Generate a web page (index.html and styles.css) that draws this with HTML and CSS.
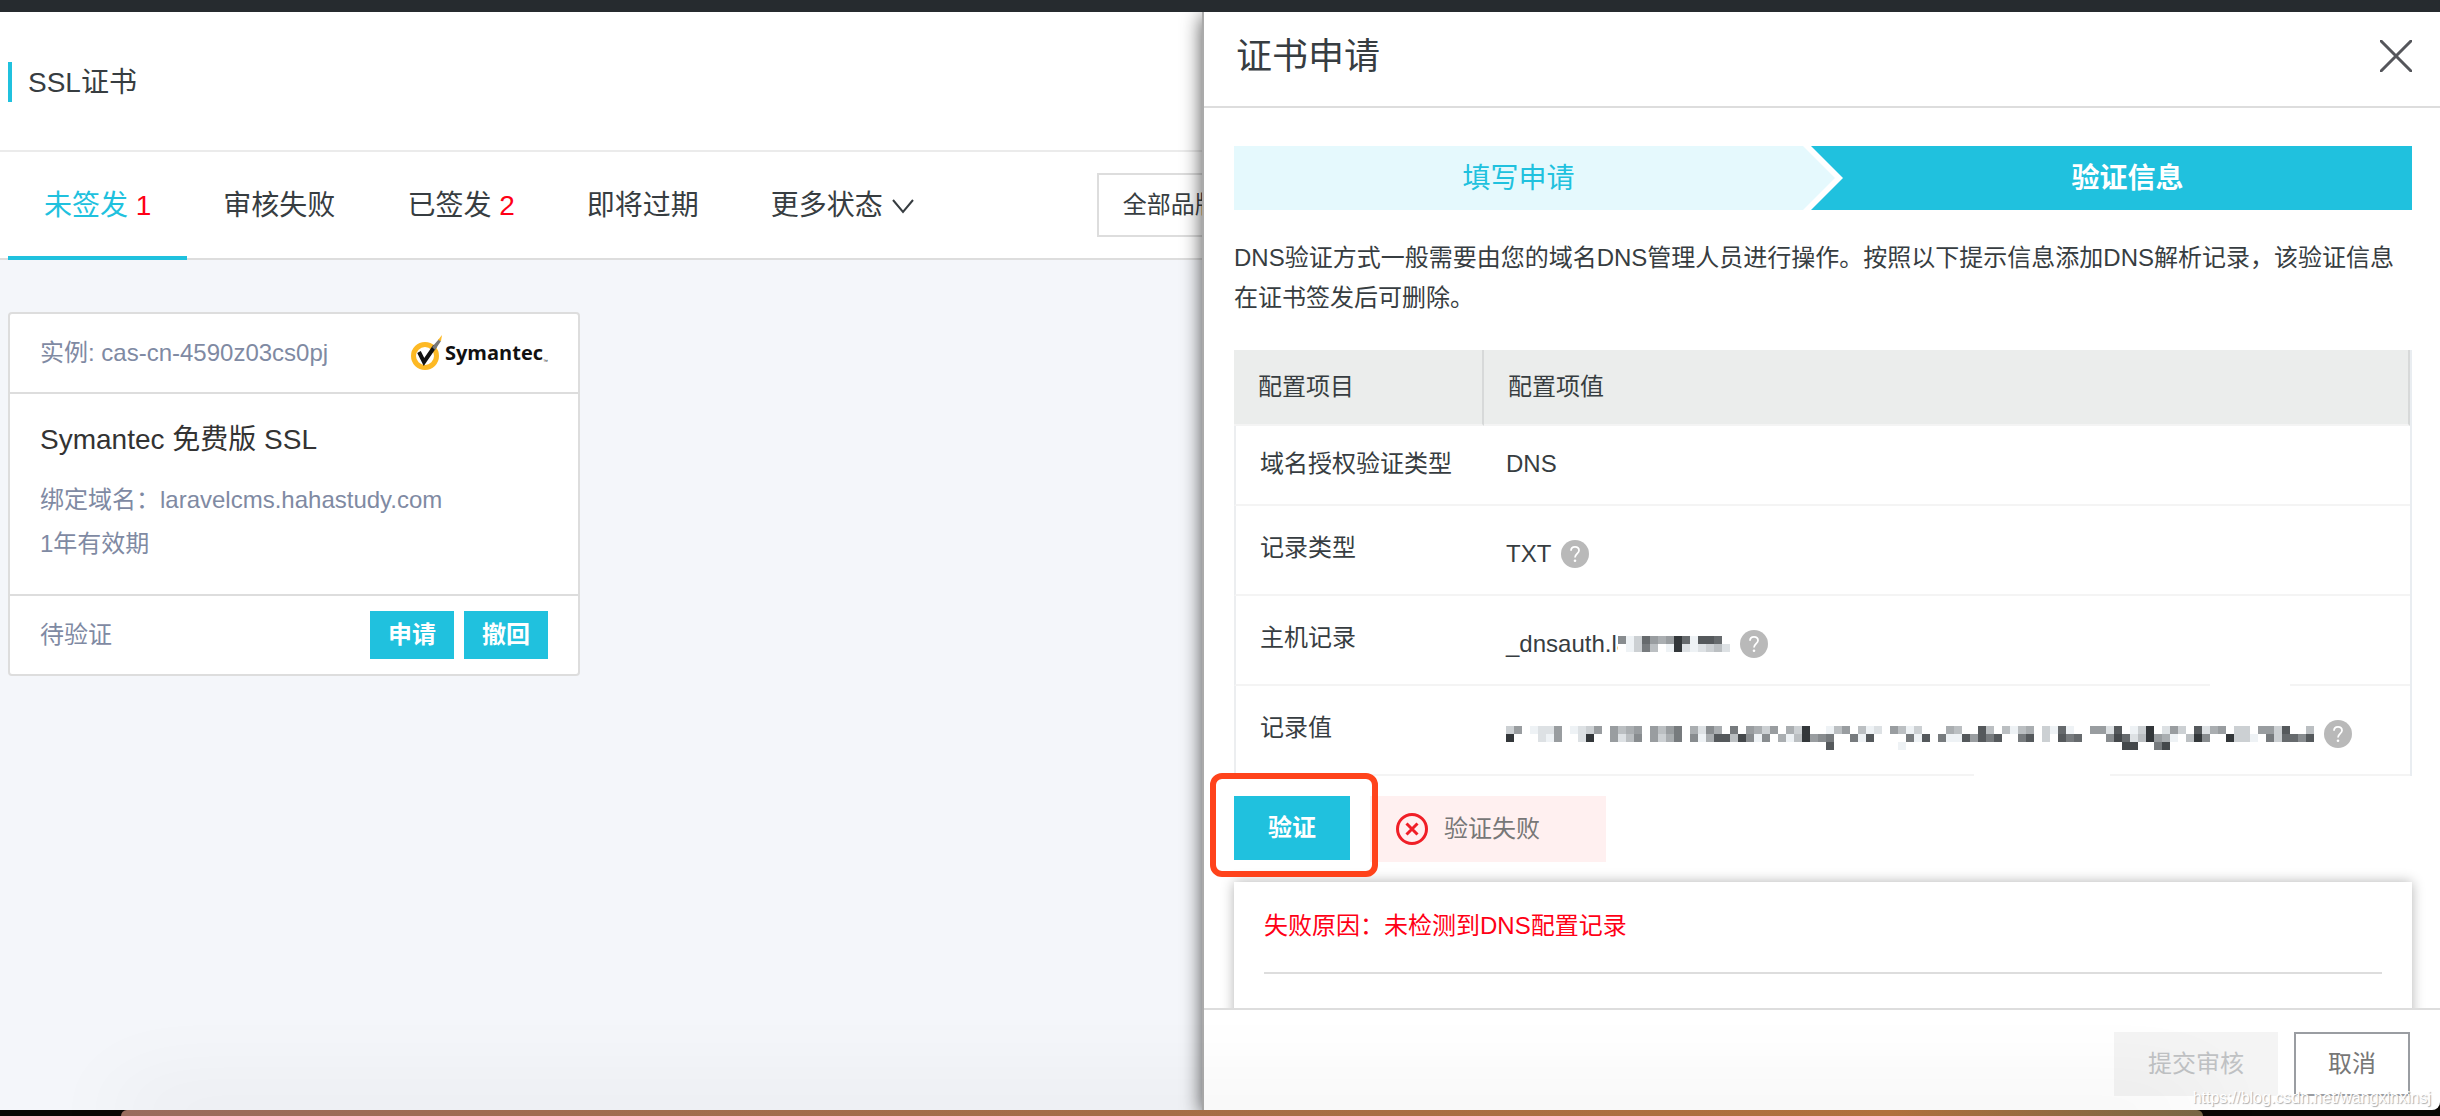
FILE: index.html
```html
<!DOCTYPE html>
<html lang="zh-CN">
<head>
<meta charset="utf-8">
<title>SSL证书</title>
<link rel="stylesheet" href="styles.css">
</head>
<body>
<svg class="sprite" aria-hidden="true">
  <symbol id="help" viewBox="0 0 28 28">
    <circle cx="14" cy="14" r="14" fill="#b9b9b9"/>
    <path d="M10 10.800C10 8.200 11.600 6.800 14 6.800s4 1.500 4 3.600c0 3-4 3.400-4 7" fill="none" stroke="#fff" stroke-width="1.800"/>
    <circle cx="14" cy="20.800" r="1.300" fill="#fff"/>
  </symbol>
</svg>
<div class="topbar"></div>
<div class="window">
  <main class="page">
    <header class="page-head"><h1 class="page-title">SSL证书</h1></header>
    <nav class="tabs">
      <button class="tab tab-active" type="button">未签发 <b class="count">1</b></button>
      <button class="tab" type="button">审核失败</button>
      <button class="tab" type="button">已签发 <b class="count">2</b></button>
      <button class="tab" type="button">即将过期</button>
      <button class="tab tab-more" type="button">更多状态
        <svg class="chevron" viewBox="0 0 24 16"><path d="M2 2l10 12L22 2" fill="none" stroke="#373d41" stroke-width="2"/></svg>
      </button>
      <select class="brand" aria-label="品牌"><option>全部品牌</option></select>
    </nav>
    <section class="cards">
      <article class="card">
        <div class="card-head">
          <span>实例: cas-cn-4590z03cs0pj</span>
          <span class="logo">
            <svg class="logo-mark" viewBox="0 0 34 38">
              <circle cx="14" cy="22" r="11.500" fill="none" stroke="#fdb924" stroke-width="5"/>
              <path d="M8 18l5 10L24 12" fill="none" stroke="#111" stroke-width="4"/>
              <path d="M21 13l7-8 2 2-6 9z" fill="#777"/>
              <path d="M27 6l4-5-1 6z" fill="#fdb924"/>
            </svg>
            <span class="logo-name">Symantec</span><span class="logo-tm">™</span>
          </span>
        </div>
        <div class="card-body">
          <h2 class="card-title">Symantec 免费版 SSL</h2>
          <p class="card-line">绑定域名：laravelcms.hahastudy.com</p>
          <p class="card-line">1年有效期</p>
        </div>
        <div class="card-foot">
          <span class="card-status">待验证</span>
          <button class="btn btn-small" type="button">申请</button>
          <button class="btn btn-small" type="button">撤回</button>
        </div>
      </article>
    </section>
  </main>

  <aside class="drawer">
    <header class="drawer-head">
      <h2 class="drawer-title">证书申请</h2>
      <button class="close" type="button" aria-label="关闭">
        <svg viewBox="0 0 32 32" width="32" height="32"><path d="M1 1l30 30M31 1L1 31" fill="none" stroke="#55565b" stroke-width="3" stroke-linecap="round"/></svg>
      </button>
    </header>
    <div class="drawer-body">
      <ol class="steps">
        <li class="step step-done">填写申请</li>
        <li class="step step-current">验证信息</li>
      </ol>
      <p class="intro">DNS验证方式一般需要由您的域名DNS管理人员进行操作。按照以下提示信息添加DNS解析记录，该验证信息在证书签发后可删除。</p>
      <table class="config">
        <colgroup><col class="col-name"><col></colgroup>
        <thead><tr><th>配置项目</th><th>配置项值</th></tr></thead>
        <tbody>
          <tr class="short"><td>域名授权验证类型</td><td>DNS</td></tr>
          <tr><td>记录类型</td><td><div class="value">TXT <svg class="help"><use href="#help"/></svg></div></td></tr>
          <tr><td>主机记录</td><td class="wiped wiped-narrow"><div class="value"><span>_dnsauth.la</span><svg class="mosaic mosaic-host" data-rows="8ec69a936e556. fec7b.e3dedcbd"></svg><svg class="help"><use href="#help"/></svg></div></td></tr>
          <tr><td>记录值</td><td class="wiped wiped-wide"><div class="value"><svg class="mosaic" data-rows="c9.edd9.edc9.9ba9.9b97.ad8a.7.9ac9.ac3..eb9.bed.9bec...ab..5b.beba.ce6e..99d5.ec3.d9c.5da9.cc.99c5..b 3...de9..d3..9db8.9ca7.8ea55b48e8.aeb3987..7e5....7e5.7ee59575..75.c.576...846db39ae.b38..3cce.7c6685 ........................................5........e...........................44..74"></svg><svg class="help"><use href="#help"/></svg></div></td></tr>
        </tbody>
      </table>
      <div class="verify">
        <div class="marked"><button class="btn btn-verify" type="button">验证</button></div>
        <div class="result" role="status">
          <svg viewBox="0 0 32 32" width="32" height="32"><circle cx="16" cy="16" r="14.500" fill="none" stroke="#f01f27" stroke-width="3"/><path d="M10.500 10.500l11 11M21.500 10.500l-11 11" stroke="#f01f27" stroke-width="3"/></svg>
          验证失败
        </div>
      </div>
      <section class="reason"><p class="reason-text">失败原因：未检测到DNS配置记录</p></section>
    </div>
    <footer class="drawer-foot">
      <button class="btn btn-submit" type="button" disabled>提交审核</button>
      <button class="btn btn-cancel" type="button">取消</button>
    </footer>
  </aside>
</div>
<div class="desktop"><div class="behind"></div></div>
<span class="watermark">https://blog.csdn.net/wangxinxinsj</span>
<script src="mosaic.js"></script>
</body>
</html>
```

FILE: styles.css
```css
* { box-sizing: border-box; }

body {
  margin: 0;
  height: 100vh;
  display: flex;
  flex-direction: column;
  position: relative;
  overflow: hidden;
  background: #0a0704;
  color: #373d41;
  font: 24px/40px "Liberation Sans", "Noto Sans CJK SC", sans-serif;
}

h1, h2, p, ol { margin: 0; padding: 0; font-weight: 400; }
button, select { font: inherit; color: inherit; border: 0; border-radius: 0; padding: 0; background: none; }

.sprite { display: none; }
.topbar { flex: 0 0 12px; background: #262b2f; }
.window { flex: 1; min-height: 0; position: relative; overflow: hidden; border-radius: 0 0 8px 0; background: #f4f6fa; }

/* certificate list */
.page-head { height: 140px; padding: 50px 8px 0; background: #fff; border-bottom: 2px solid #ebebeb; }
.page-title { height: 40px; padding-left: 16px; border-left: 4px solid #20c1de; font-size: 28px; line-height: 42px; }

.tabs { display: flex; align-items: center; height: 108px; padding-left: 8px; background: #fff; border-bottom: 2px solid #ddd; font-size: 28px; }
.tab { align-self: stretch; margin-bottom: -2px; padding: 4px 36px 0; white-space: nowrap; border-bottom: 4px solid transparent; }
.tab-active { color: #20c1de; border-bottom-color: #20c1de; }
.count { color: #ff0016; font-weight: 400; }
.tab-more { display: flex; align-items: center; gap: 8px; padding-right: 0; }
.chevron { width: 24px; height: 16px; }
.brand { width: 240px; height: 64px; margin-left: 182px; padding: 0 24px; border: 2px solid #ddd; background: #fff; font-size: 24px; appearance: none; }

.cards { padding: 52px 8px; }
.card { width: 572px; background: #fff; border: 2px solid #ddd; border-radius: 4px; color: #7f8aa3; }
.card-head, .card-foot { display: flex; align-items: center; padding: 0 30px; }
.card-head { height: 80px; justify-content: space-between; border-bottom: 2px solid #ddd; }
.card-body { height: 202px; padding: 26px 30px 0; border-bottom: 2px solid #ddd; }
.card-title { margin-bottom: 18px; color: #333; font-size: 28px; }
.card-line { line-height: 44px; }
.card-foot { height: 78px; gap: 10px; }
.card-status { margin-right: auto; }

.logo { display: flex; align-items: center; color: #111; }
.logo-mark { width: 34px; height: 38px; }
.logo-name { font: 700 20px/40px "Open Sans", sans-serif; }
.logo-tm { align-self: flex-end; padding-bottom: 8px; font-size: 5px; line-height: 8px; }

.btn { text-align: center; }
.btn-small { width: 84px; height: 48px; background: #20c1de; color: #fff; font-weight: 700; }

/* drawer */
.drawer { position: absolute; top: 0; right: 0; bottom: 0; width: calc(50% + 18px); display: flex; flex-direction: column; background: #fff; border-left: 2px solid #aaa; border-radius: 0 0 8px 0; box-shadow: 0 4px 20px rgba(0, 0, 0, .7); }
.drawer-head { display: flex; flex: 0 0 96px; align-items: center; justify-content: space-between; padding: 0 28px 6px 32px; border-bottom: 2px solid #ddd; }
.drawer-title { font-size: 36px; line-height: 44px; padding-top: 2px; }
.close { width: 32px; height: 32px; line-height: 0; }
.drawer-body { flex: 1; min-height: 0; overflow: hidden; padding: 38px 28px 0 30px; }

.steps { display: flex; height: 64px; list-style: none; font-size: 28px; line-height: 66px; text-align: center; }
.step { flex: 1 1 0; }
.step-done { padding-right: 32px; background: #e5f9fd; color: #20c1de; clip-path: polygon(0 0, calc(100% - 32px) 0, 100% 50%, calc(100% - 32px) 100%, 0 100%); }
.step-current { margin-left: -24px; padding-left: 32px; background: #20c1de; color: #fff; font-weight: 700; clip-path: polygon(0 0, 100% 0, 100% 100%, 0 100%, 32px 50%); }
.intro { margin: 28px 0 32px; }

.config { width: 100%; table-layout: fixed; border-collapse: separate; border-spacing: 0; border-right: 2px solid #e9edf1; }
.col-name { width: 250px; }
.config th { height: 76px; padding: 0 24px; background: #ebedec; border-right: 2px solid #d7d9d9; border-bottom: 2px solid #f4f4f4; font-weight: 400; text-align: left; }
.config td { height: 90px; padding: 22px 22px 0; border-bottom: 2px solid #f4f4f4; vertical-align: top; }
.config td:first-child { padding-left: 24px; border-left: 2px solid #eceef0; }
.config td:last-child { padding-top: 28px; }
.config .short td { height: 80px; padding-top: 18px; }
.value { display: flex; align-items: center; gap: 10px; height: 40px; }
.help { flex: none; width: 28px; height: 28px; }
.mosaic { flex: none; display: block; background: #fff; }
.mosaic-host { margin-left: -22px; }

/* rubbed-out stretches of the row lines */
.wiped { position: relative; }
.wiped::after { content: ""; position: absolute; height: 2px; background: #fff; }
.wiped-narrow::after { right: 120px; bottom: -2px; width: 80px; }
.wiped-wide::after { right: 300px; bottom: -2px; width: 136px; }

.verify { display: flex; align-items: flex-start; gap: 20px; margin: 20px 0; }
.marked { position: relative; }
.marked::after { content: ""; position: absolute; inset: -23px -28px -17px -24px; border: 6px solid #ff431b; border-radius: 12px; }
.btn-verify { display: block; width: 116px; height: 64px; background: #20c1de; color: #fff; font-weight: 700; }
.result { display: flex; align-items: center; gap: 16px; width: 236px; height: 66px; padding-left: 26px; background: #fff0f0; color: #777; }
.reason { height: 240px; padding: 24px 30px; background: #fff; box-shadow: 0 0 12px rgba(0, 0, 0, .3); }
.reason-text { padding-bottom: 26px; border-bottom: 2px solid #ddd; color: #ff0016; }

.drawer-foot { display: flex; flex: 0 0 102px; justify-content: flex-end; gap: 16px; padding: 22px 30px 0; border-top: 2px solid #ddd; }
.btn-submit { width: 164px; height: 64px; background: #f4f4f4; color: #c0c2c4; }
.btn-cancel { width: 116px; height: 64px; border: 2px solid #9a9da2; color: #777; }

/* edge of the window lying behind */
.desktop { flex: 0 0 6px; padding: 0 237px 0 121px; position: relative; }
.behind { height: 6px; border-radius: 8px 8px 0 0; background: linear-gradient(90deg, #996c5e, #a06c50 20%, #a56d46 50%, #b0703c 85%, #776544); box-shadow: 0 0 90px 4px rgba(0, 0, 0, .2); }
.watermark { position: absolute; right: 9px; bottom: 8px; font-size: 16px; line-height: 20px; color: #fff; text-shadow: 1px 1px 1px #aaa; }
```

FILE: mosaic.js
```js
// Draws the pixelated values: one hex digit per 8px cell is its grey level, a dot is empty.
const CELL = 8;
for (const svg of document.querySelectorAll('.mosaic')) {
  const rows = svg.dataset.rows.split(' ');
  const width = rows[0].length * CELL;
  const height = 4 * CELL;
  svg.setAttribute('width', width);
  svg.setAttribute('height', height);
  rows.forEach((row, y) => {
    [...row].forEach((tone, x) => {
      if (tone === '.') return;
      const level = parseInt(tone, 16) * 17;
      const rect = document.createElementNS('http://www.w3.org/2000/svg', 'rect');
      rect.setAttribute('x', x * CELL);
      rect.setAttribute('y', (y + 1) * CELL);
      rect.setAttribute('width', CELL);
      rect.setAttribute('height', CELL);
      rect.setAttribute('fill', `rgb(${level}, ${Math.min(level + 4, 255)}, ${Math.min(level + 7, 255)})`);
      svg.append(rect);
    });
  });
}
```
